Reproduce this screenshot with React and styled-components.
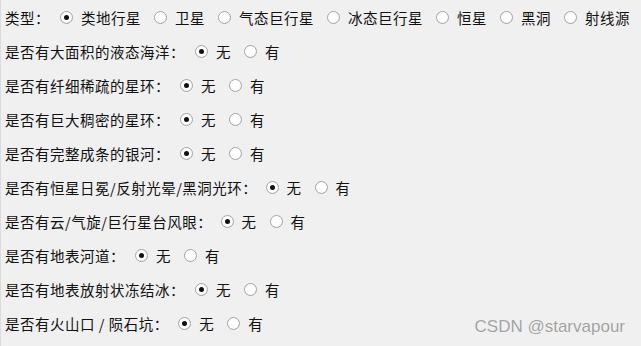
import React from "react";
import styled, { createGlobalStyle } from "styled-components";

const GlobalStyle = createGlobalStyle`
  html, body {
    margin: 0;
    padding: 0;
    background: #f0f0f0;
  }
`;

const Page = styled.div`
  position: relative;
  width: 641px;
  height: 346px;
  box-sizing: border-box;
  background: #f0f0f0;
  border-left: 1px solid #dcdcdc;
  padding-left: 4px;
  font-family: "Noto Sans CJK SC", "Noto Sans", sans-serif;
  font-size: 14.5px;
  color: #111;
  overflow: hidden;
`;

const Row = styled.div`
  display: flex;
  align-items: center;
  height: 34px;
  white-space: nowrap;
`;

const Label = styled.span`
  display: inline-block;
  width: ${(props) => props.chars * 15}px;
  margin-right: 10px;
  letter-spacing: 0.5px;
`;

const Option = styled.label`
  display: flex;
  align-items: center;
  margin-right: 13px;
  letter-spacing: 0.5px;
`;

const Radio = styled.input.attrs({ type: "radio" })`
  appearance: none;
  margin: 0 8px 0 0;
  width: 13px;
  height: 13px;
  border-radius: 50%;
  border: 1px solid #a4a4a4;
  background: radial-gradient(circle at 40% 40%, #ffffff 55%, #e6e6e6 100%);
  box-sizing: border-box;
  display: grid;
  place-items: center;

  &:checked::after {
    content: "";
    width: 5px;
    height: 5px;
    border-radius: 50%;
    background: #111;
  }
`;

const Watermark = styled.div`
  position: absolute;
  right: 16px;
  bottom: 9px;
  font-family: "Liberation Sans", Arial, sans-serif;
  font-size: 17px;
  line-height: 20px;
  color: #a2a2a2;
  text-shadow: 0 0 1px #fff;
`;

const typeOptions = ["类地行星", "卫星", "气态巨行星", "冰态巨行星", "恒星", "黑洞", "射线源"];

const questions = [
  "是否有大面积的液态海洋：",
  "是否有纤细稀疏的星环：",
  "是否有巨大稠密的星环：",
  "是否有完整成条的银河：",
  "是否有恒星日冕/反射光晕/黑洞光环：",
  "是否有云/气旋/巨行星台风眼：",
  "是否有地表河道：",
  "是否有地表放射状冻结冰：",
  "是否有火山口 / 陨石坑：",
];

const labelWidth = (text) => {
  let w = 0;
  for (const ch of text) {
    w += ch === "/" ? 0.35 : ch === " " ? 0.27 : 1;
  }
  return w;
};

const App = () => {
  return (
    <>
      <GlobalStyle />
      <Page>
        <Row>
          <Label chars={3}>类型：</Label>
          {typeOptions.map((opt, i) => (
            <Option key={opt}>
              <Radio name="type" defaultChecked={i === 0} />
              {opt}
            </Option>
          ))}
        </Row>
        {questions.map((q, i) => (
          <Row key={q}>
            <Label chars={labelWidth(q)}>{q}</Label>
            <Option>
              <Radio name={"q" + i} defaultChecked />
              无
            </Option>
            <Option>
              <Radio name={"q" + i} />
              有
            </Option>
          </Row>
        ))}
        <Watermark>CSDN @starvapour</Watermark>
      </Page>
    </>
  );
};

export default App;
